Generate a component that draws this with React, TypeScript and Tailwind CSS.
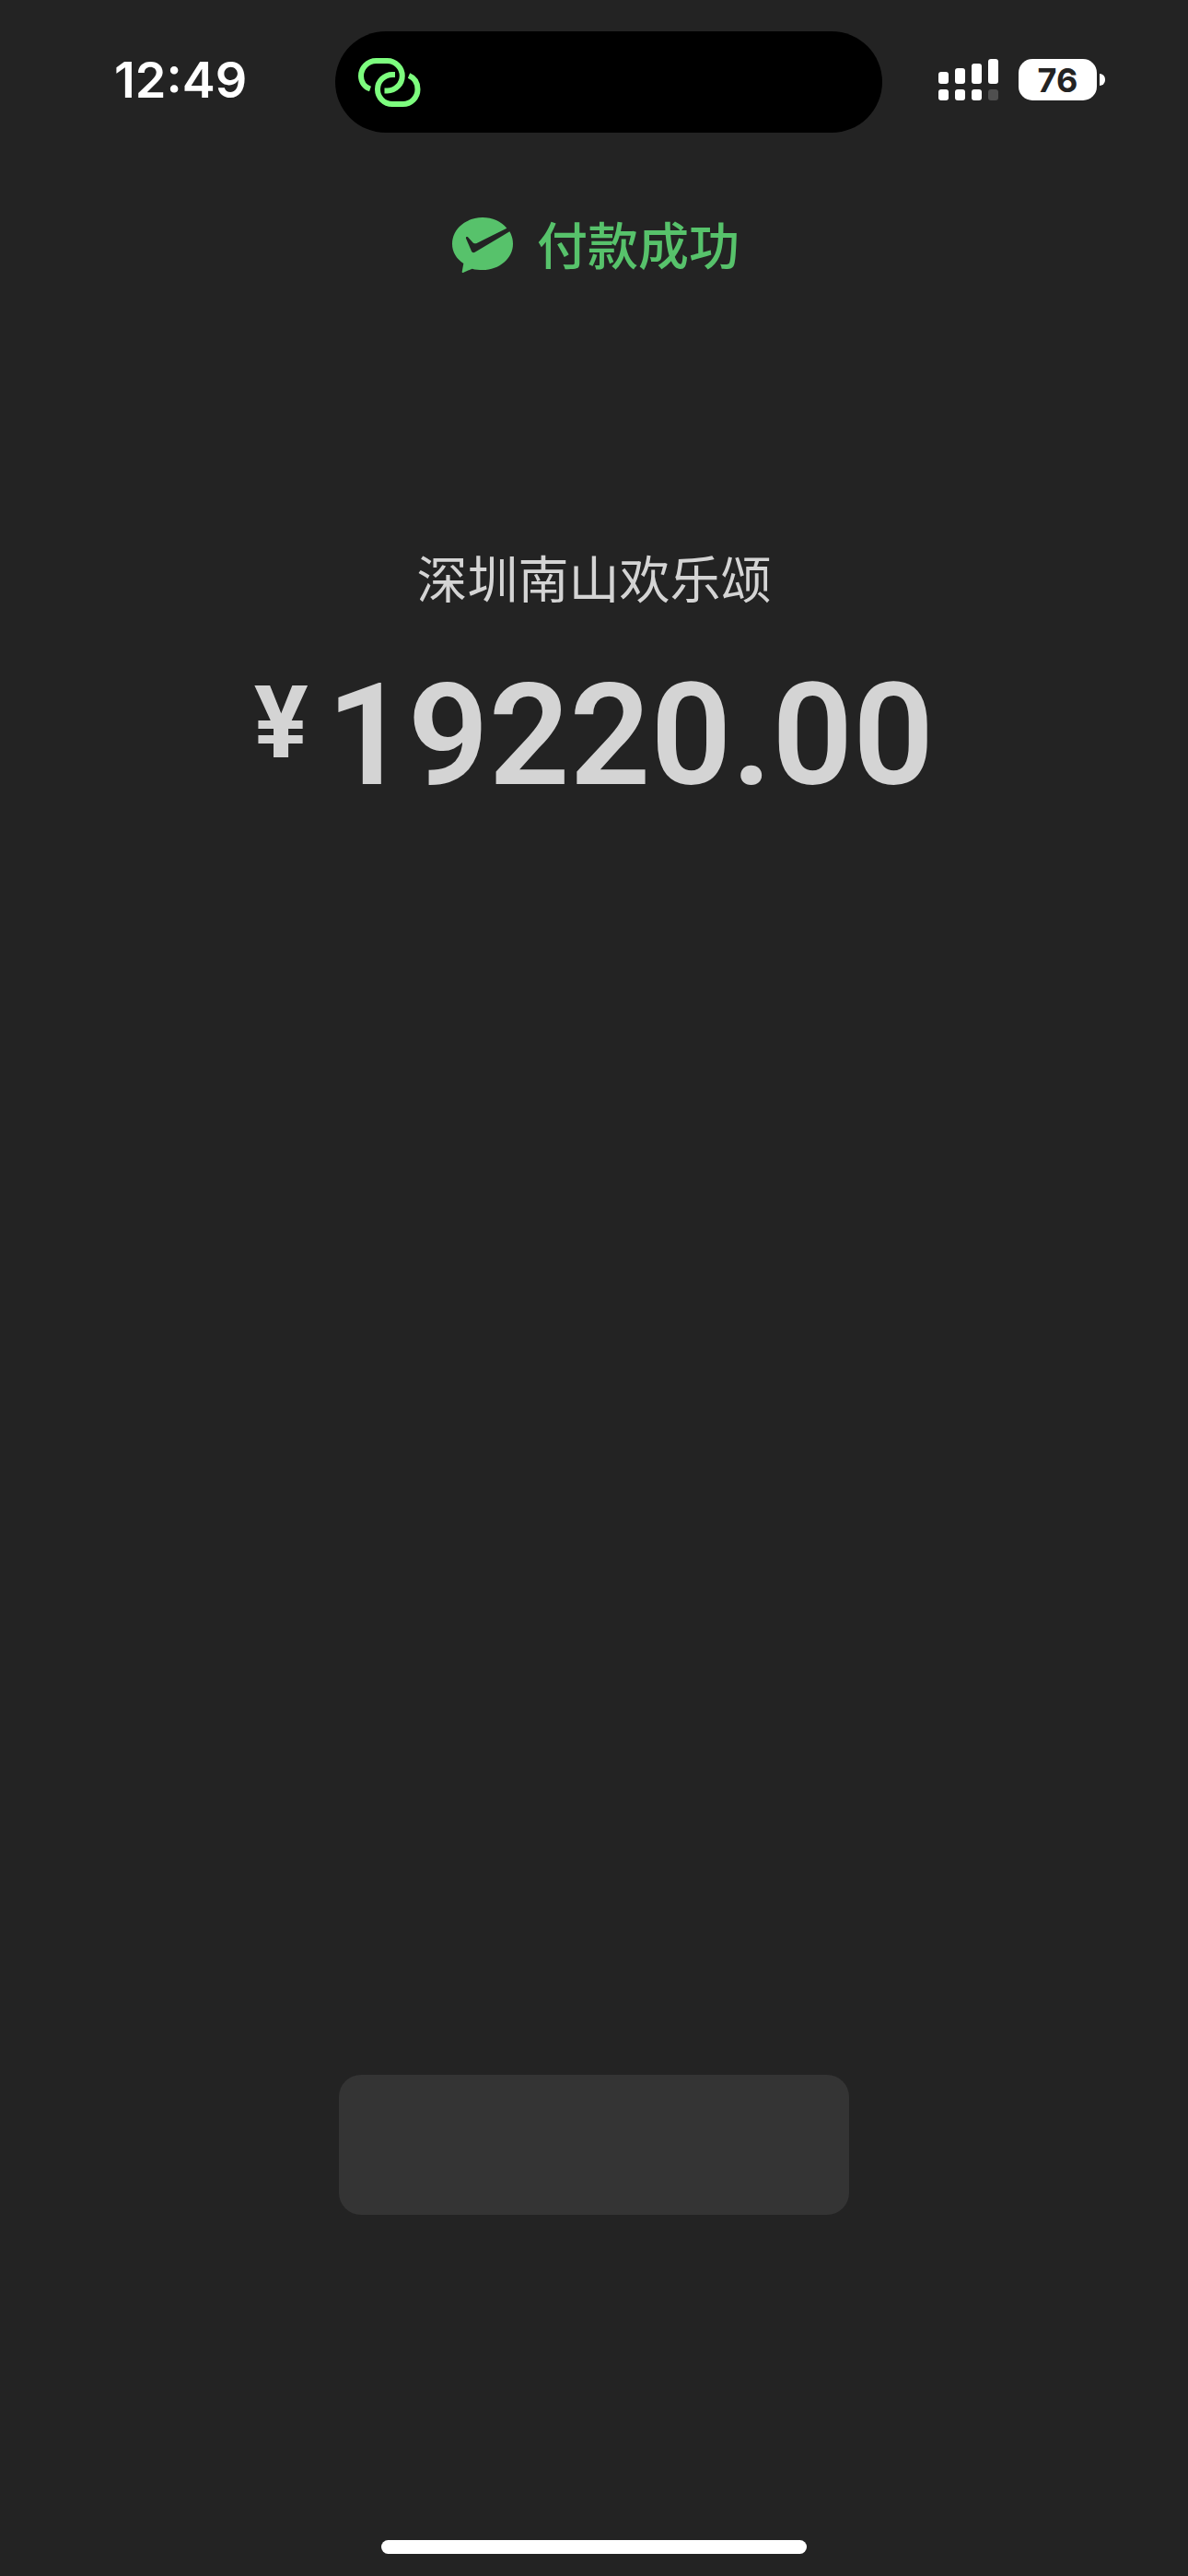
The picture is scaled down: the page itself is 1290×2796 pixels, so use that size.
import React from 'react';

const LinkIcon: React.FC<{ className?: string }> = ({ className }) => (
  <svg viewBox="0 0 68 53" fill="none" stroke="currentColor" strokeWidth="6" className={className} aria-hidden="true">
    <path d="M13 33.5C7 31.5 3 26 3 19.5A16.5 16.5 0 0 1 19.5 3H31.5A16.25 16.25 0 0 1 31.5 35.5H28.5" />
    <path d="M40 18H37A16 16 0 0 0 37 50H48.5A16 16 0 0 0 64.5 34C64.5 27 61 21.5 55 19" />
  </svg>
);

const PaySuccessIcon: React.FC<{ className?: string }> = ({ className }) => (
  <svg viewBox="0 0 198 180" className={className} aria-hidden="true">
    <path
      fill="currentColor"
      d="M99 0C44 0 0 38 0 86C0 112 14 135 37 150L32 177C32 180 34 181 37 179L65 167C76 170 87 171 99 171C154 171 198 133 198 86C198 71 194 58 187 46L74 113C69 116 65 114 63 110L45 68C44 64 47 61 51 64L66 80C70 85 75 86 80 84L178 35C160 13 131 0 99 0Z"
    />
  </svg>
);

const SignalIcon: React.FC<{ className?: string }> = ({ className }) => (
  <svg viewBox="0 0 65 45" fill="currentColor" className={className} aria-hidden="true">
    <rect x="0" y="14" width="11" height="13" rx="3" />
    <rect x="18" y="10" width="11" height="17" rx="3" />
    <rect x="36" y="5" width="11" height="22" rx="3" />
    <rect x="54" y="0" width="11" height="27" rx="3" />
    <rect x="0" y="33" width="11" height="12" rx="3" />
    <rect x="18" y="33" width="11" height="12" rx="3" />
    <rect x="36" y="33" width="11" height="12" rx="3" />
    <rect x="54" y="33" width="11" height="12" rx="3" opacity="0.2" />
  </svg>
);

const Battery: React.FC<{ level: number }> = ({ level }) => (
  <div className="flex items-center gap-[3px]">
    <span className="flex h-[45px] w-[85px] items-center justify-center rounded-[15px] bg-white text-4xl leading-none font-bold text-[#232323]">
      {level}
    </span>
    <span className="h-[13px] w-[6px] rounded-r-full bg-white" />
  </div>
);

const StatusBar: React.FC = () => (
  <header className="grid grid-cols-[364fr_594fr_332fr] items-center pt-[34px] font-['Inter',sans-serif] text-white">
    <div className="pb-1 pl-[124px] text-[54px] leading-none font-semibold">12:49</div>
    <div className="flex h-[110px] items-center rounded-full bg-black pl-[25px]">
      <LinkIcon className="h-[53px] w-[68px] text-[#7dfd7e]" />
    </div>
    <div className="flex items-center justify-end gap-[22px] pr-[90px] pb-[5px]">
      <SignalIcon className="h-[45px] w-[65px]" />
      <Battery level={76} />
    </div>
  </header>
);

const App: React.FC = () => {
  return (
    <div className="flex min-h-screen flex-col bg-[#232323] font-['Noto_Sans_CJK_SC',sans-serif] text-[#d4d4d4]">
      <StatusBar />

      <main className="flex flex-1 flex-col items-center">
        <h1 className="mt-[82px] flex items-center gap-[26px] pl-1 text-[55px] leading-[74px] font-medium text-[#57c26b]">
          <PaySuccessIcon className="h-[60px] w-[66px]" />
          <span className="pb-1.5">付款成功</span>
        </h1>

        <p className="mt-[279px] text-[55px] leading-[80px]">深圳南山欢乐颂</p>

        <p className="mt-[57px] flex items-start font-['Roboto',sans-serif] leading-none">
          <span className="mt-2 mr-5 text-[110px] font-bold">¥</span>
          <span className="text-[154px] font-semibold">19220.00</span>
        </p>

        <button type="button" aria-label="完成" className="mt-auto h-[152px] w-[554px] rounded-3xl bg-[#343434]" />
      </main>

      <footer className="flex justify-center pt-[353px] pb-6">
        <div className="h-[15px] w-[462px] rounded-full bg-white" />
      </footer>
    </div>
  );
};

export default App;
